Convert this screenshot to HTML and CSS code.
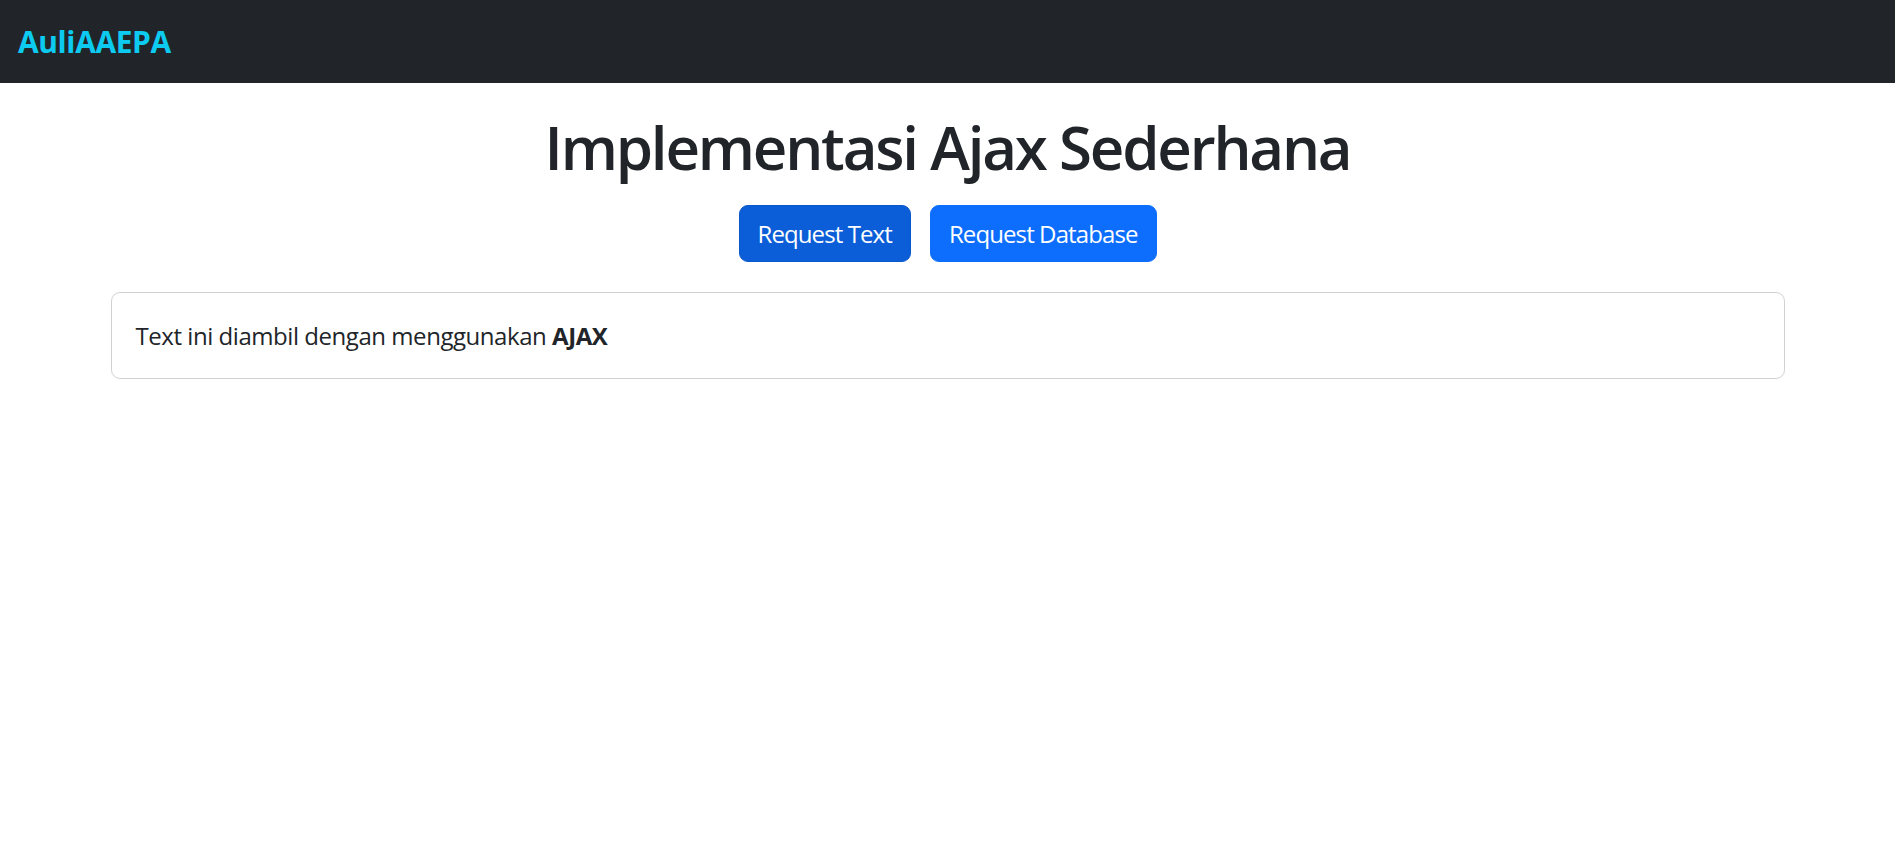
FILE: index.html
```html
<!DOCTYPE html>
<html lang="id">
<head>
<meta charset="utf-8">
<title>Implementasi Ajax Sederhana</title>
<link rel="stylesheet" href="styles.css">
</head>
<body>
<nav class="navbar">
  <a class="brand" href="#">AuliAAEPA</a>
</nav>
<main class="container">
  <h1 class="title">Implementasi Ajax Sederhana</h1>
  <div class="actions">
    <button class="btn btn-active" type="button">Request Text</button>
    <button class="btn" type="button">Request Database</button>
  </div>
  <div class="card">
    <div class="card-body">Text ini diambil dengan menggunakan <b>AJAX</b></div>
  </div>
</main>
</body>
</html>
```

FILE: styles.css
```css
* { box-sizing: border-box; }
html, body { margin: 0; padding: 0; background: #fff; }
body {
  font-family: "Open Sans", "Noto Sans", sans-serif;
  font-size: 24px;
  line-height: 36px;
  color: #212529;
}
.navbar {
  background: #212529;
  padding: 12px 18px;
  display: flex;
  align-items: center;
}
.brand {
  color: #0dcaf0;
  font-weight: 700;
  font-size: 30px;
  line-height: 45px;
  padding: 7px 0;
  letter-spacing: -0.4px;
  text-decoration: none;
}
.container {
  max-width: 1710px;
  margin: 0 auto;
  padding: 0 18px;
}
.title {
  margin: 28px 0 22px;
  text-align: center;
  font-size: 60px;
  line-height: 72px;
  font-weight: 600;
  letter-spacing: -2.2px;
}
.actions {
  display: flex;
  justify-content: center;
  gap: 19px;
}
.btn {
  font-family: inherit;
  font-size: 24px;
  line-height: 36px;
  padding: 9.5px 18px;
  border: 1px solid #0d6efd;
  background: #0d6efd;
  color: #fff;
  border-radius: 9px;
  letter-spacing: -0.9px;
  cursor: pointer;
}
.btn-active {
  background: #0b5ed7;
  border-color: #0a58ca;
}
.card {
  margin-top: 30px;
  border: 1px solid rgba(0, 0, 0, 0.175);
  border-radius: 9px;
}
.card-body {
  padding: 25px 24px 24px;
  letter-spacing: -0.45px;
}
```
